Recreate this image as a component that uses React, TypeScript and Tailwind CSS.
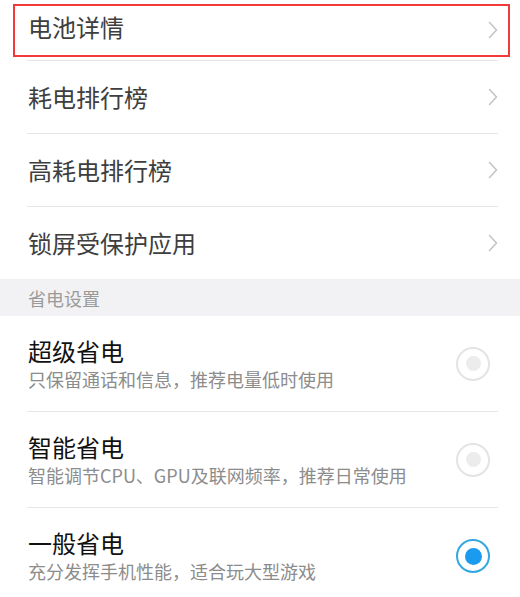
const menuItems = ["电池详情", "耗电排行榜", "高耗电排行榜", "锁屏受保护应用"];

const modes = [
  { title: "超级省电", desc: "只保留通话和信息，推荐电量低时使用", checked: false },
  { title: "智能省电", desc: "智能调节CPU、GPU及联网频率，推荐日常使用", checked: false },
  { title: "一般省电", desc: "充分发挥手机性能，适合玩大型游戏", checked: true },
];

function Chevron() {
  return (
    <svg width="10" height="18" viewBox="0 0 10 18" fill="none" className="shrink-0">
      <path d="M1.5 1.5 L8.5 9 L1.5 16.5" stroke="#c4c4c4" strokeWidth="1.6" strokeLinecap="round" strokeLinejoin="round" />
    </svg>
  );
}

function Radio({ checked }: { checked: boolean }) {
  if (checked) {
    return (
      <div className="w-[34px] h-[34px] rounded-full border-2 border-[#33a8e0] flex items-center justify-center shrink-0">
        <div className="w-[17px] h-[17px] rounded-full bg-[#1a9bef]" />
      </div>
    );
  }
  return (
    <div className="w-[34px] h-[34px] rounded-full border-2 border-[#e4e4e4] flex items-center justify-center shrink-0">
      <div className="w-[15px] h-[15px] rounded-full bg-[#ececec]" />
    </div>
  );
}

export default function App() {
  return (
    <div
      className="relative w-[520px] h-[597px] overflow-hidden bg-white"
      style={{ fontFamily: '"Noto Sans CJK SC", "Noto Sans", sans-serif' }}
    >
      {/* menu rows */}
      <div className="pl-[27px] pr-[22px]">
        {menuItems.map((label, idx) => (
          <div
            key={label}
            className={`flex items-center justify-between border-b border-[#e6e6e6] pl-px ${
              idx === 0 ? "h-[61px]" : idx === 3 ? "h-[72px] border-b-0" : "h-[73px]"
            }`}
          >
            <span className={`text-[24px] leading-none text-[#3e3e3e] ${idx === 0 ? "-mt-[6px]" : ""}`}>
              {label}
            </span>
            <Chevron />
          </div>
        ))}
      </div>

      {/* section header */}
      <div className="h-[37px] bg-[#f2f2f4] flex items-center pl-[28px]">
        <span className="text-[18px] leading-none text-[#9a9a9a]">省电设置</span>
      </div>

      {/* power modes */}
      <div className="pl-[27px] pr-[30px]">
        {modes.map((m, idx) => (
          <div
            key={m.title}
            className={`flex items-center justify-between h-[96px] ${
              idx < modes.length - 1 ? "border-b border-[#e6e6e6] mr-[-8px] pr-[8px]" : ""
            }`}
          >
            <div className="flex flex-col pl-px">
              <span className="text-[24px] leading-[30px] text-[#111111]">{m.title}</span>
              <span className="text-[18px] leading-[26px] text-[#8c8c8c]">{m.desc}</span>
            </div>
            <Radio checked={m.checked} />
          </div>
        ))}
      </div>

      {/* highlight box */}
      <div className="absolute left-[13px] top-[4px] w-[497px] h-[53px] border-2 border-[#f23a3a]" />
    </div>
  );
}
